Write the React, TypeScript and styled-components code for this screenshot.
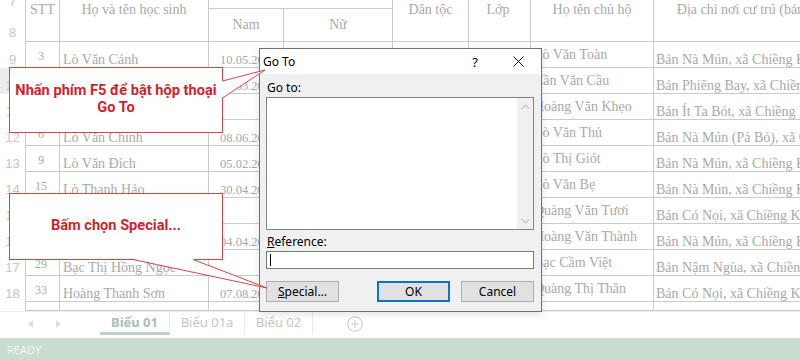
import React from 'react'
import styled, { createGlobalStyle } from 'styled-components'

const GlobalStyle = createGlobalStyle`
  html, body { margin: 0; padding: 0; background: #fff; }
  * { box-sizing: border-box; }
`

const Screen = styled.div`
  position: relative;
  width: 800px;
  height: 360px;
  overflow: hidden;
  display: flex;
  flex-direction: column;
  background: #fff;
`

const SheetArea = styled.div`
  height: 311px;
  overflow: hidden;
`

const Grid = styled.div`
  display: grid;
  grid-template-columns: 26px 34px 149px 75px 109px 76px 62px 123px 240px;
  grid-template-rows: 9px 33px repeat(10, 26px) 9px;
  width: 894px;
  font-family: "Liberation Serif", "Times New Roman", serif;
  font-size: 14px;
  color: #a9a9a9;
`

type CellProps = {
  $v?: 'flex-start' | 'center' | 'flex-end'
  $h?: 'flex-start' | 'center'
  $pl?: number
  $pt?: number
  $pb?: number
  $rows?: number
  $span?: number
  $size?: number
}

const Cell = styled.div<CellProps>`
  display: flex;
  align-items: ${p => p.$v || 'flex-end'};
  justify-content: ${p => p.$h || 'flex-start'};
  padding: ${p => p.$pt ?? 0}px 3px ${p => p.$pb ?? 0}px ${p => p.$pl ?? 3}px;
  border-right: 1px solid #cbcbcb;
  border-bottom: 1px solid #cbcbcb;
  white-space: nowrap;
  overflow: hidden;
  line-height: 14px;
  font-size: ${p => p.$size ?? 14}px;
  ${p => (p.$span ? `grid-column: span ${p.$span};` : '')}
  ${p => (p.$rows ? `grid-row: span ${p.$rows};` : '')}
`

const RowHead = styled.div<{ $pb: number; $active?: boolean }>`
  display: flex;
  align-items: flex-end;
  justify-content: center;
  padding-bottom: ${p => p.$pb}px;
  border-right: 1px solid #cbcbcb;
  background: ${p => (p.$active ? '#ececec' : '#fff')};
  font-family: "Liberation Sans", Arial, sans-serif;
  font-size: 13px;
  line-height: 15px;
  color: #c6c6c6;
  overflow: hidden;
`

/* ---------- tabs + status ---------- */

const TabBar = styled.div`
  height: 27px;
  display: flex;
  align-items: stretch;
  padding-bottom: 3px;
  border-top: 1px solid #ececec;
  font-family: "Noto Sans", "Segoe UI", sans-serif;
  font-size: 13px;
`

const NavArrows = styled.div`
  width: 100px;
  display: flex;
  align-items: center;
  gap: 23px;
  padding-left: 28px;
`

const Tab = styled.div<{ $active?: boolean; $w: number }>`
  width: ${p => p.$w}px;
  display: flex;
  align-items: center;
  justify-content: center;
  border-right: 1px solid #e9e9e9;
  border-bottom: 3px solid ${p => (p.$active ? '#bdd2c6' : 'transparent')};
  color: ${p => (p.$active ? '#a6bfb2' : '#c6c6c6')};
  font-weight: ${p => (p.$active ? 700 : 400)};
`

const AddSheet = styled.div`
  display: flex;
  align-items: center;
  padding-left: 34px;
`

const StatusBar = styled.div`
  height: 22px;
  background: #c8dcd0;
  display: flex;
  align-items: center;
  padding-left: 7px;
  font-family: "Noto Sans", "Segoe UI", sans-serif;
  font-size: 11px;
  color: #f1f6f3;
`

/* ---------- dialog ---------- */

const Dialog = styled.div`
  position: absolute;
  left: 259px;
  top: 48px;
  width: 283px;
  height: 264px;
  border: 1px solid #707070;
  background: #f0f0f0;
  display: flex;
  flex-direction: column;
  font-family: "Noto Sans", "Segoe UI", sans-serif;
  font-size: 12px;
  color: #000;
  box-shadow: 0 2px 8px rgba(0, 0, 0, 0.12);
`

const TitleBar = styled.div`
  height: 25px;
  background: #fff;
  display: flex;
  align-items: center;
  padding-left: 3px;
`

const Title = styled.span`
  flex: 1;
`

const TitleButton = styled.span<{ $w: number }>`
  width: ${p => p.$w}px;
  display: flex;
  justify-content: center;
  align-items: center;
  font-size: 13px;
`

const Body = styled.div`
  flex: 1;
  display: flex;
  flex-direction: column;
  padding: 6px 7px 9px 6px;
`

const Label = styled.div<{ $mt?: number }>`
  height: 16px;
  line-height: 16px;
  margin-top: ${p => p.$mt ?? 0}px;
  padding-left: 1px;
`

const ListBox = styled.div`
  height: 133px;
  margin-top: 1px;
  background: #fff;
  border: 1px solid #828282;
  display: flex;
  justify-content: flex-end;
`

const ScrollTrack = styled.div`
  width: 16px;
  background: #f0f0f0;
  display: flex;
  flex-direction: column;
  justify-content: space-between;
  align-items: center;
  padding: 6px 0 5px;
`

const Input = styled.div`
  height: 18px;
  margin-top: 1px;
  background: #fff;
  border: 1px solid #7a7a7a;
  display: flex;
  align-items: center;
  padding-left: 3px;
`

const Caret = styled.span`
  width: 1px;
  height: 12px;
  background: #000;
`

const ButtonRow = styled.div`
  margin-top: 12px;
  display: flex;
  justify-content: space-between;
`

const ButtonGroup = styled.div`
  display: flex;
  gap: 11px;
`

const Button = styled.div<{ $default?: boolean }>`
  width: 73px;
  height: 21px;
  display: flex;
  align-items: center;
  justify-content: center;
  background: #e1e1e1;
  border: ${p => (p.$default ? '2px solid #0a74c9' : '1px solid #adadad')};
`

/* ---------- callouts ---------- */

const Callout = styled.div<{ $top: number; $h: number }>`
  position: absolute;
  left: 9px;
  top: ${p => p.$top}px;
  width: 214px;
  height: ${p => p.$h}px;
  border: 1px solid #d8434a;
  background: #fff;
  display: flex;
  align-items: center;
  justify-content: center;
  text-align: center;
  font-family: Roboto, "Noto Sans", sans-serif;
  font-weight: 700;
  font-size: 14.6px;
  line-height: 17px;
  color: #d21f2b;
  padding-bottom: 2px;
`

const Tail = styled.svg<{ $l: number; $t: number }>`
  position: absolute;
  left: ${p => p.$l}px;
  top: ${p => p.$t}px;
  overflow: visible;
`

const rows = [
  { n: 9, stt: '3', name: 'Lò Văn Cảnh', nam: '10.05.2009', nu: '', dt: 'Thái', lop: '5A', ch: 'Lò Văn Toàn', addr: 'Bản Nà Mún, xã Chiềng Khay, huyện Quỳnh Nhai' },
  { n: 10, stt: '4', name: 'Cần Văn Chung', nam: '15.03.2009', nu: '', dt: 'Thái', lop: '5A', ch: 'Cần Văn Cầu', addr: 'Bản Phiêng Bay, xã Chiềng Khay, huyện Quỳnh Nhai' },
  { n: 11, stt: '5', name: 'Hoàng Thị Mai', nam: '', nu: '21.07.2009', dt: 'Thái', lop: '5A', ch: 'Hoàng Văn Khẹo', addr: 'Bản Ít Ta Bót, xã Chiềng Khay, huyện Quỳnh Nhai' },
  { n: 12, stt: '6', name: 'Lò Văn Chinh', nam: '08.06.2009', nu: '', dt: 'Thái', lop: '5A', ch: 'Lò Văn Thủ', addr: 'Bản Nà Mún (Pá Bó), xã Chiềng Khay, huyện Quỳnh Nhai' },
  { n: 13, stt: '9', name: 'Lò Văn Đích', nam: '05.02.2009', nu: '', dt: 'Thái', lop: '5A', ch: 'Lò Thị Giót', addr: 'Bản Nà Mún, xã Chiềng Khay, huyện Quỳnh Nhai' },
  { n: 14, stt: '15', name: 'Lò Thanh Hảo', nam: '30.04.2009', nu: '', dt: 'Thái', lop: '5A', ch: 'Lò Văn Bẹ', addr: 'Bản Nà Mún, xã Chiềng Khay, huyện Quỳnh Nhai' },
  { n: 15, stt: '18', name: 'Quàng Thị Hoa', nam: '', nu: '12.09.2009', dt: 'Thái', lop: '5A', ch: 'Quàng Văn Tươi', addr: 'Bản Có Nọi, xã Chiềng Khay, huyện Quỳnh Nhai' },
  { n: 16, stt: '22', name: 'Hoàng Văn Hải', nam: '04.04.2009', nu: '', dt: 'Thái', lop: '5A', ch: 'Hoàng Văn Thành', addr: 'Bản Nà Mún, xã Chiềng Khay, huyện Quỳnh Nhai' },
  { n: 17, stt: '29', name: 'Bạc Thị Hồng Ngọc', nam: '', nu: '19.11.2009', dt: 'Thái', lop: '5A', ch: 'Bạc Cầm Việt', addr: 'Bản Nậm Ngùa, xã Chiềng Khay, huyện Quỳnh Nhai' },
  { n: 18, stt: '33', name: 'Hoàng Thanh Sơn', nam: '07.08.2009', nu: '', dt: 'Thái', lop: '5A', ch: 'Quàng Thị Thân', addr: 'Bản Có Nọi, xã Chiềng Khay, huyện Quỳnh Nhai' },
]

const Chevron = ({ up }: { up?: boolean }) => (
  <svg width="9" height="6" viewBox="0 0 9 6">
    <polyline
      points={up ? '0.5,5 4.5,1 8.5,5' : '0.5,1 4.5,5 8.5,1'}
      fill="none"
      stroke="#a6a6a6"
      strokeWidth="1"
    />
  </svg>
)

const App = () => {
  return (
    <Screen>
      <GlobalStyle />
      <SheetArea>
        <Grid>
          <RowHead $pb={0}>7</RowHead>
          <Cell $rows={2} $h="center" $v="flex-start" $pt={3}>STT</Cell>
          <Cell $rows={2} $h="center" $v="flex-start" $pt={3}>Họ và tên học sinh</Cell>
          <Cell $span={2} />
          <Cell $rows={2} $h="center" $v="flex-start" $pt={3}>Dân tộc</Cell>
          <Cell $rows={2} $h="center" $v="flex-start" $pt={3} $pl={0}>Lớp</Cell>
          <Cell $rows={2} $h="center" $v="flex-start" $pt={3}>Họ tên chủ hộ</Cell>
          <Cell $rows={2} $h="center" $v="flex-start" $pt={3}>Địa chỉ nơi cư trú (bản, xã, huyện)</Cell>
          <RowHead $pb={2}>8</RowHead>
          <Cell $h="center" $v="center">Nam</Cell>
          <Cell $h="center" $v="center">Nữ</Cell>

          {rows.map(r => (
            <React.Fragment key={r.n}>
              <RowHead $pb={1} $active={r.n === 10}>{r.n}</RowHead>
              <Cell $h="center" $v="center" $pt={2} $pl={0} $size={12}>{r.stt}</Cell>
              <Cell>{r.name}</Cell>
              <Cell $pl={11} $size={12.5}>{r.nam}</Cell>
              <Cell $pl={11} $size={12.5}>{r.nu}</Cell>
              <Cell $h="center">{r.dt}</Cell>
              <Cell $h="center">{r.lop}</Cell>
              <Cell $pb={5}>{r.ch}</Cell>
              <Cell $pl={2}>{r.addr}</Cell>
            </React.Fragment>
          ))}

          <RowHead $pb={0} />
          <Cell />
          <Cell />
          <Cell />
          <Cell />
          <Cell />
          <Cell />
          <Cell />
          <Cell />
        </Grid>
      </SheetArea>

      <TabBar>
        <NavArrows>
          <svg width="5" height="8" viewBox="0 0 5 8">
            <polygon points="5,0 0,4 5,8" fill="#dedede" />
          </svg>
          <svg width="5" height="8" viewBox="0 0 5 8">
            <polygon points="0,0 5,4 0,8" fill="#dedede" />
          </svg>
        </NavArrows>
        <Tab $active $w={70}>Biểu 01</Tab>
        <Tab $w={75}>Biểu 01a</Tab>
        <Tab $w={68}>Biểu 02</Tab>
        <AddSheet>
          <svg width="16" height="16" viewBox="0 0 16 16">
            <circle cx="8" cy="8" r="7.2" fill="none" stroke="#d0d0d0" strokeWidth="1.2" />
            <line x1="8" y1="4" x2="8" y2="12" stroke="#d0d0d0" strokeWidth="1.2" />
            <line x1="4" y1="8" x2="12" y2="8" stroke="#d0d0d0" strokeWidth="1.2" />
          </svg>
        </AddSheet>
      </TabBar>

      <StatusBar>READY</StatusBar>

      <Dialog>
        <TitleBar>
          <Title>Go To</Title>
          <TitleButton $w={40}>?</TitleButton>
          <TitleButton $w={46}>
            <svg width="11" height="11" viewBox="0 0 11 11">
              <line x1="0.5" y1="0.5" x2="10.5" y2="10.5" stroke="#111" strokeWidth="1" />
              <line x1="10.5" y1="0.5" x2="0.5" y2="10.5" stroke="#111" strokeWidth="1" />
            </svg>
          </TitleButton>
        </TitleBar>
        <Body>
          <Label>Go to:</Label>
          <ListBox>
            <ScrollTrack>
              <Chevron up />
              <Chevron />
            </ScrollTrack>
          </ListBox>
          <Label $mt={4}>
            <u>R</u>eference:
          </Label>
          <Input>
            <Caret />
          </Input>
          <ButtonRow>
            <Button>
              <span>
                <u>S</u>pecial...
              </span>
            </Button>
            <ButtonGroup>
              <Button $default>OK</Button>
              <Button>Cancel</Button>
            </ButtonGroup>
          </ButtonRow>
        </Body>
      </Dialog>

      <Callout $top={67} $h={66}>
        <span>
          Nhấn phím F5 để bật hộp thoại
          <br />
          Go To
        </span>
        <Tail $l={210} $t={0} width="50" height="40" viewBox="0 0 50 40">
          <polygon points="2,13 45,2 2,30" fill="#fff" />
          <polyline points="2.5,13 45,2 2.5,30" fill="none" stroke="#d8434a" strokeWidth="1" />
        </Tail>
      </Callout>

      <Callout $top={193} $h={67}>
        <span>Bấm chọn Special...</span>
        <Tail $l={120} $t={60} width="150" height="40" viewBox="0 0 150 40">
          <polygon points="3,5 63,5 137,34" fill="#fff" />
          <polyline points="3,5.5 137,34 63,5.5" fill="none" stroke="#d8434a" strokeWidth="1" />
        </Tail>
      </Callout>
    </Screen>
  )
}

export default App
